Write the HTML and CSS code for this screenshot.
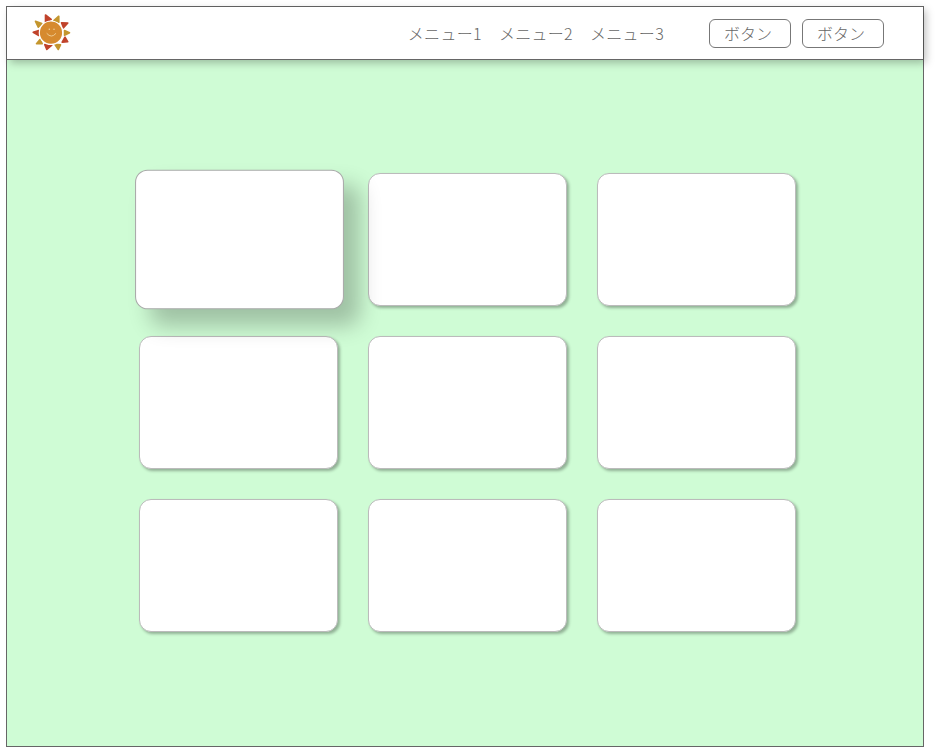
FILE: index.html
```html
<!DOCTYPE html>
<html>
<head>
    <title>メニュー</title>
    <link rel="stylesheet" href="styles.css">
</head>
<body>
    <div class="frame">
        <div class="top-bar">
            <svg class="logo" width="40" height="38" viewBox="0 0 40 38">
                <path class="ray-red" d="M14.500 1L20.200 5.300L14.500 8.200Z"/>
                <path class="ray-gold" d="M27.800 2.200L22.800 6.700L27.800 8.200Z"/>
                <path class="ray-red" d="M36.800 9L30.500 8.800L32.500 13.800Z"/>
                <path class="ray-gold" d="M38.500 18.700L33.500 16.500L33.500 21.200Z"/>
                <path class="ray-red" d="M36.800 27.800L34 23.200L31.200 28.200Z"/>
                <path class="ray-gold" d="M29.500 30.800L23.800 30.300L27.300 35.500Z"/>
                <path class="ray-red" d="M13.800 30.600L20.800 31.200L15.800 35.500Z"/>
                <path class="ray-gold" d="M5.500 29.700L9 25.500L11.200 29.700Z"/>
                <path class="ray-red" d="M2.200 18.300L7.800 16.500L7.800 21.500Z"/>
                <path class="ray-gold" d="M4.500 7.300L10.800 9.500L7.300 13.200Z"/>
                <circle cx="20" cy="18.700" r="11.700" fill="#d68a2e" stroke="white" stroke-width="1.200"/>
                <path d="M15.700 19.300q4.700 5.500 9.300 0" fill="none" stroke="#f3d9a8" stroke-width="0.8"/>
                <circle cx="18.300" cy="15.300" r="0.7" fill="#f3d9a8"/>
                <circle cx="23" cy="15.300" r="0.7" fill="#f3d9a8"/>
            </svg>
            <div class="menu">
                <span>メニュー1</span>
                <span>メニュー2</span>
                <span>メニュー3</span>
            </div>
            <div class="buttons">
                <button>ボタン</button>
                <button>ボタン</button>
            </div>
        </div>
        <div class="main">
            <div class="card-grid">
                <div class="card card-raised"></div>
                <div class="card"></div>
                <div class="card"></div>
                <div class="card"></div>
                <div class="card"></div>
                <div class="card"></div>
                <div class="card"></div>
                <div class="card"></div>
                <div class="card"></div>
            </div>
        </div>
    </div>
</body>
</html>
```

FILE: styles.css
```css
html, body {
    height: 100%;
}
body {
    margin: 0;
    padding: 6px 12px 0 6px;
    box-sizing: border-box;
    background-color: white;
    font-family: "Noto Sans CJK JP", "Liberation Sans", sans-serif;
    font-size: 16px;
    font-weight: 300;
    color: #666;
    overflow: hidden;
}
.frame {
    box-sizing: border-box;
    height: 741px;
    border: 1px solid #666;
    display: flex;
    flex-direction: column;
    background-color: #cffcd5;
}
.top-bar {
    height: 52px;
    flex-shrink: 0;
    display: flex;
    align-items: center;
    padding: 0 39px 0 24px;
    background-color: white;
    border-bottom: 1px solid #666;
    box-shadow: 3px 3px 8px rgba(0, 0, 0, 0.25);
}
.logo {
    flex-shrink: 0;
}
.ray-red {
    fill: #c0432b;
    stroke: #c0432b;
    stroke-width: 1.6;
    stroke-linejoin: round;
}
.ray-gold {
    fill: #c4962e;
    stroke: #c4962e;
    stroke-width: 1.6;
    stroke-linejoin: round;
}
.menu {
    display: flex;
    gap: 17px;
    margin-left: auto;
    margin-right: 45px;
    letter-spacing: 0.3px;
}
.buttons {
    display: flex;
    gap: 11px;
}
button {
    width: 82px;
    height: 29px;
    padding: 0 4px 1px 0;
    border: 1px solid #777;
    border-radius: 6px;
    background-color: white;
    color: #666;
    font-family: inherit;
    font-size: 16px;
    font-weight: 300;
}
.main {
    flex-grow: 1;
    padding-top: 113px;
}
.card-grid {
    display: grid;
    grid-template-columns: repeat(3, 199px);
    grid-auto-rows: 133px;
    gap: 30px;
    justify-content: center;
    padding-left: 5px;
}
.card {
    box-sizing: border-box;
    background-color: white;
    border: 1px solid #bbb;
    border-radius: 12px;
    box-shadow: 2px 2px 3px rgba(0, 0, 0, 0.3);
}
.card-raised {
    transform: translateX(1px) scale(1.05);
    border-color: #aaa;
    box-shadow: 15px 15px 20px rgba(0, 0, 0, 0.23);
}
```
